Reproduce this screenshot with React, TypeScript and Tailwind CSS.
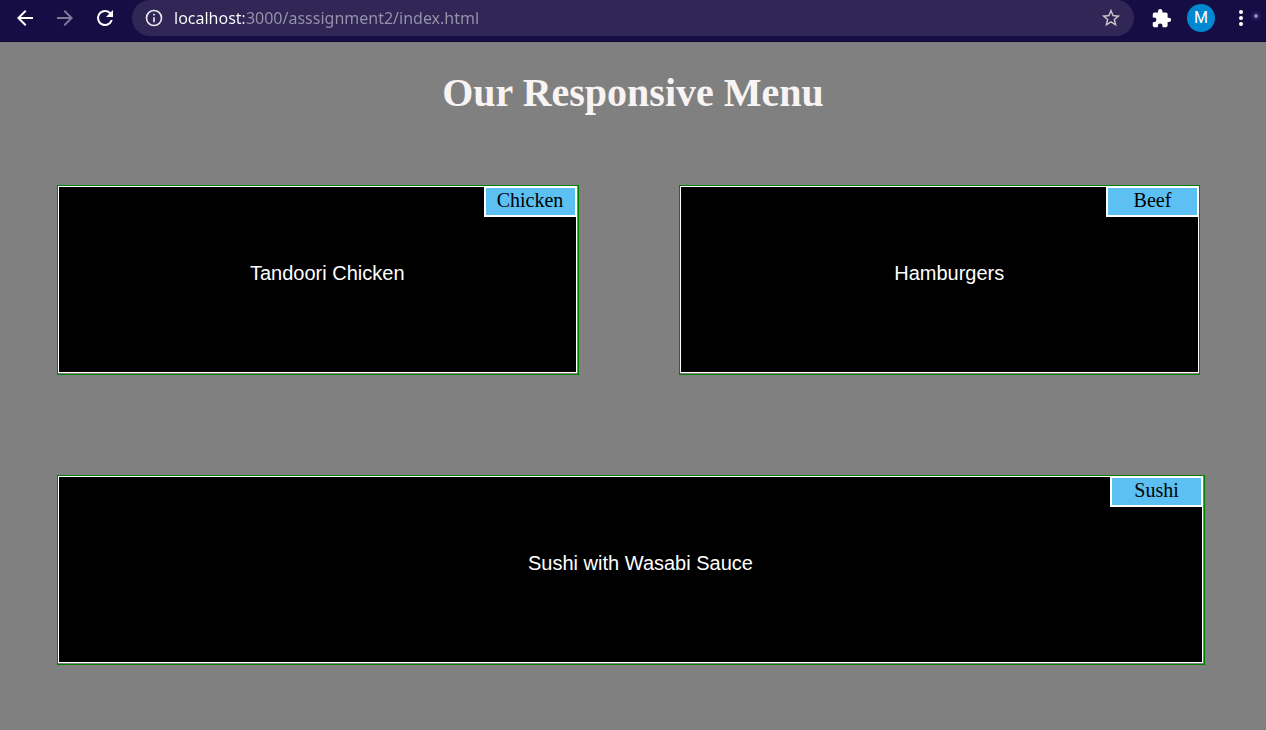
import { useState } from "react";

const iconButton = "flex h-7 w-7 shrink-0 items-center justify-center rounded-full";

function BrowserBar() {
  const [address, setAddress] = useState("localhost:3000/asssignment2/index.html");
  return (
    <header className="relative flex h-[42px] items-start border-b border-[#0d0633] bg-[#170d45] pr-[11px] pl-[11px] pt-1 text-white">
      <nav aria-label="History" className="flex gap-3">
        <button type="button" aria-label="Back" className={iconButton}>
          <svg viewBox="0 0 24 24" className="h-6 w-6" fill="currentColor">
            <path d="M20 11H7.83l5.59-5.59L12 4l-8 8 8 8 1.41-1.41L7.83 13H20v-2z" />
          </svg>
        </button>
        <button type="button" aria-label="Forward" className={`${iconButton} text-[#7f799a]`}>
          <svg viewBox="0 0 24 24" className="h-6 w-6" fill="currentColor">
            <path d="M12 4l-1.41 1.41L16.17 11H4v2h12.17l-5.58 5.59L12 20l8-8z" />
          </svg>
        </button>
        <button type="button" aria-label="Reload" className={iconButton}>
          <svg viewBox="0 0 24 24" className="h-6 w-6" fill="currentColor">
            <path d="M17.65 6.35A7.96 7.96 0 0 0 12 4a8 8 0 1 0 7.73 10h-2.08A6 6 0 1 1 12 6c1.66 0 3.14.69 4.22 1.78L13 11h7V4l-2.35 2.35z" />
          </svg>
        </button>
      </nav>
      <div className="-mt-1 ml-[13px] flex h-9 min-w-0 flex-1 items-center rounded-full bg-[#302757] pr-3 pl-3">
        <button type="button" aria-label="Site information" className="shrink-0 text-[#e8e6ee]">
          <svg viewBox="0 0 24 24" className="h-5 w-5" fill="currentColor">
            <path d="M11 7h2v2h-2zm0 4h2v6h-2zm1-9a10 10 0 1 0 0 20 10 10 0 0 0 0-20zm0 18a8 8 0 1 1 0-16 8 8 0 0 1 0 16z" />
          </svg>
        </button>
        <input
          type="text"
          aria-label="Address"
          value={address}
          onChange={(e) => setAddress(e.target.value)}
          className="ml-[10px] h-7 min-w-0 flex-1 bg-[linear-gradient(to_right,#fff_70px,#9893ab_70px)] bg-clip-text font-['Noto_Sans',sans-serif] text-base text-transparent caret-white outline-none"
        />
        <button type="button" aria-label="Bookmark this page" className="shrink-0 text-[#cac7c6]">
          <svg viewBox="0 0 24 24" className="h-[22px] w-[22px]" fill="currentColor">
            <path d="M22 9.24l-7.19-.62L12 2 9.19 8.63 2 9.24l5.46 4.73L5.82 21 12 17.27 18.18 21l-1.63-7.03L22 9.24zM12 15.4l-3.76 2.27 1-4.28-3.32-2.88 4.38-.38L12 6.1l1.71 4.04 4.38.38-3.32 2.88 1 4.28L12 15.4z" />
          </svg>
        </button>
      </div>
      <div className="ml-[13px] flex items-center gap-3">
        <button type="button" aria-label="Extensions" className={iconButton}>
          <svg viewBox="0 0 24 24" className="h-[21px] w-[21px]" fill="currentColor">
            <path d="M20.5 11H19V7a2 2 0 0 0-2-2h-4V3.5a2.5 2.5 0 0 0-5 0V5H4a2 2 0 0 0-2 2v3.8h1.5a2.7 2.7 0 0 1 0 5.4H2V20a2 2 0 0 0 2 2h3.8v-1.5a2.7 2.7 0 0 1 5.400 0V22H17a2 2 0 0 0 2-2v-4h1.5a2.5 2.5 0 0 0 0-5z" />
          </svg>
        </button>
        <button
          type="button"
          aria-label="Profile M"
          className="flex h-7 w-7 shrink-0 items-center justify-center rounded-full bg-[#0288d1] font-['Roboto',sans-serif] text-base"
        >
          M
        </button>
        <button type="button" aria-label="Browser menu" className={iconButton}>
          <svg viewBox="0 0 24 24" className="h-6 w-6" fill="currentColor">
            <circle cx="12" cy="6" r="2" />
            <circle cx="12" cy="12" r="2" />
            <circle cx="12" cy="18" r="2" />
          </svg>
        </button>
      </div>
      <svg
        viewBox="0 0 16 16"
        aria-hidden="true"
        className="pointer-events-none absolute top-2 right-[2px] h-4 w-4"
      >
        <circle cx="8" cy="8" r="5" fill="#26246a" opacity="0.5" />
        <circle cx="8" cy="8" r="2" fill="#8d8fc0" />
      </svg>
    </header>
  );
}

function MenuCard({ tag, dish, flush = false }: { tag: string; dish: string; flush?: boolean }) {
  return (
    <section className={`h-[190px] border border-[#008000] pb-px ${flush ? "pr-0" : "pr-px"}`}>
      <div className="flex h-full flex-col border border-white bg-black">
        <h2 className="-mt-px -mr-px h-[31px] w-[93px] self-end border-2 border-white bg-[#5cc1f2] text-center font-['Liberation_Serif',serif] text-xl leading-6 text-black">
          {tag}
        </h2>
        <p className="pt-11 pl-5 text-center font-['Liberation_Sans',sans-serif] text-xl leading-6 text-white">
          {dish}
        </p>
      </div>
    </section>
  );
}

export default function App() {
  return (
    <div className="min-h-screen bg-[#808080]">
      <BrowserBar />
      <main className="pr-[61px] pb-[65px] pl-[57px]">
        <h1 className="pt-7 pl-1 text-center font-['Liberation_Serif',serif] text-[40px] leading-[46px] font-bold text-[#f8f4f3]">
          Our Responsive Menu
        </h1>
        <div className="mt-[69px] grid grid-cols-2 gap-[100px] pr-[5px]">
          <MenuCard tag="Chicken" dish="Tandoori Chicken" />
          <MenuCard tag="Beef" dish="Hamburgers" flush />
        </div>
        <div className="mt-[100px]">
          <MenuCard tag="Sushi" dish="Sushi with Wasabi Sauce" />
        </div>
      </main>
    </div>
  );
}
